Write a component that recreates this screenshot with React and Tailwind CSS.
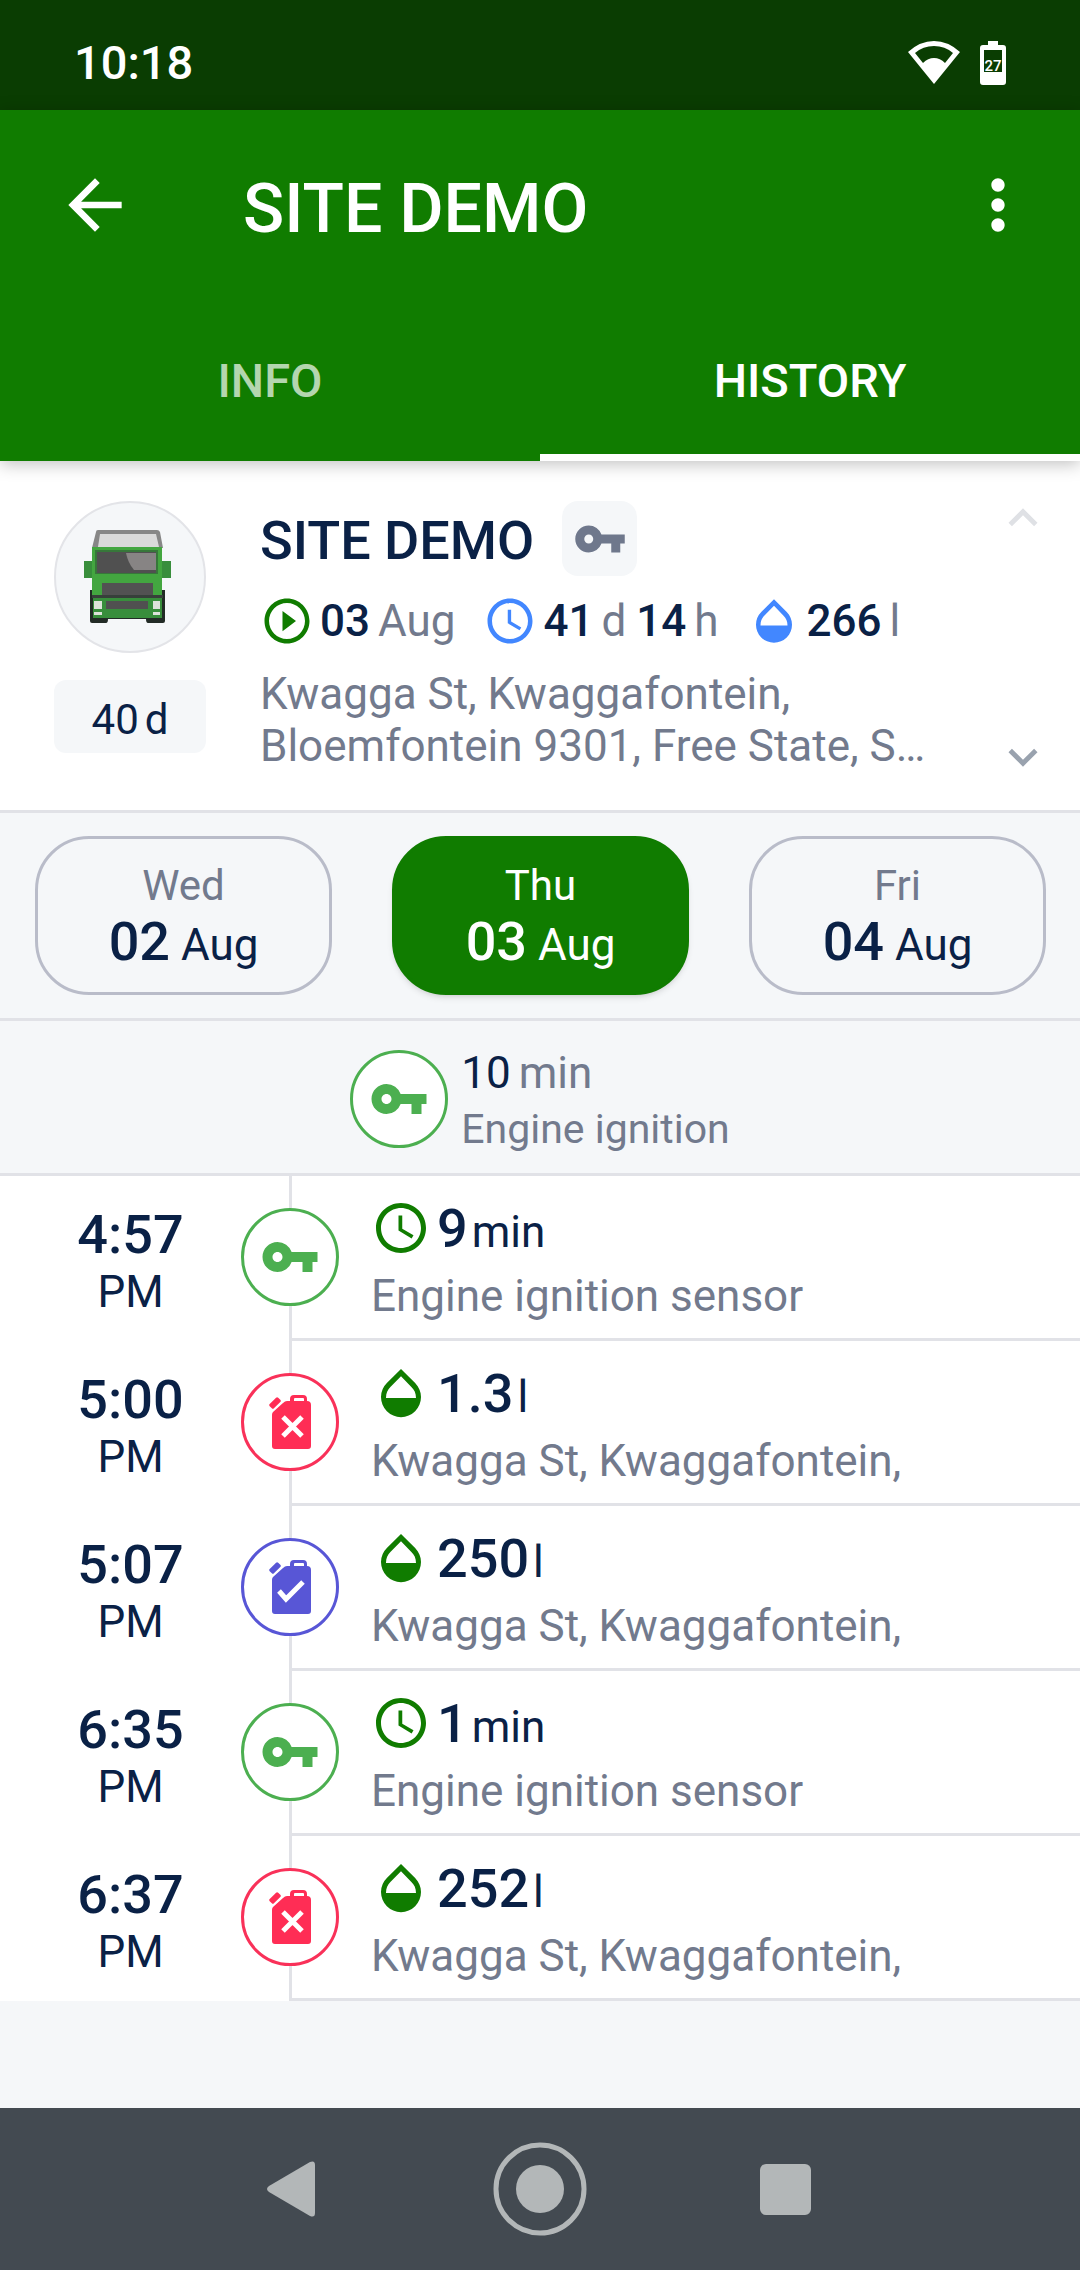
import {
  MdAccessTime,
  MdArrowBack,
  MdExpandLess,
  MdExpandMore,
  MdMoreVert,
  MdOpacity,
  MdPlayCircleOutline,
  MdVpnKey,
} from "react-icons/md";

const days = [
  { weekday: "Wed", day: "02", month: "Aug" },
  { weekday: "Thu", day: "03", month: "Aug", selected: true },
  { weekday: "Fri", day: "04", month: "Aug" },
];

const events = [
  { time: "4:57", type: "ignition", value: "9", unit: "min", text: "Engine ignition sensor" },
  { time: "5:00", type: "drain", value: "1.3", unit: "l", text: "Kwagga St, Kwaggafontein," },
  { time: "5:07", type: "refuel", value: "250", unit: "l", text: "Kwagga St, Kwaggafontein," },
  { time: "6:35", type: "ignition", value: "1", unit: "min", text: "Engine ignition sensor" },
  { time: "6:37", type: "drain", value: "252", unit: "l", text: "Kwagga St, Kwaggafontein," },
];

const eventColors = {
  ignition: "border-[#4caf50] text-[#4caf50]",
  drain: "border-[#f93159] text-[#ff2d55]",
  refuel: "border-[#5856d6] text-[#5856d6]",
};

const Truck = () => (
  <svg viewBox="0 0 87 93" className="w-[87px] h-[93px]" aria-hidden="true">
    <path d="M14 0h59q2 0 3 2l3 16H8l4-16q0-2 2-2z" fill="#878787" />
    <path d="M16 4h56l3 13H14z" fill="#dadada" />
    <path d="M6 60h75v31q0 2-2 2H64q-2 0-2-4H24q0 4-2 4H8q-2 0-2-2z" fill="#222b26" />
    <path d="M0 31h9v17H0zM77 31h10v17H77z" fill="#388e3c" />
    <path d="M8 17h70v48H8z" fill="#43a640" />
    <path d="M11 20h63v24H11z" fill="#37773a" />
    <path d="M13 22h59v21H13z" fill="#505050" />
    <path d="M42 23h30v17H50q-6-7-8-17z" fill="#878484" />
    <path d="M18 53h51v13H18z" fill="#525252" />
    <path d="M8 65h71v3H8z" fill="#37403a" />
    <path d="M9 68h69v20H9z" fill="#388e3c" />
    <path d="M22 71h42v8H22z" fill="#505050" />
    <path d="M10 71h8v8h-8zM69 71h7v8h-7zM10 82h8v3h-8zM69 82h7v3h-7z" fill="#dde2da" />
  </svg>
);

const FuelCan = ({ checked }) => (
  <svg viewBox="0 0 42 54" className="w-[42px] h-[54px]" aria-hidden="true">
    <path
      d="M4 17 14 8q2-2 4-2h3V4q0-4 4-4h9q4 0 4 4v2q4 0 4 4v41q0 3-3 3H6q-3 0-3-3V20q0-2 1-3zM26 3q-1 0-1 1v2h10V4q0-1-1-1z"
      fill="currentColor"
      fillRule="evenodd"
    />
    <rect x="0" y="5" width="12" height="6" rx="1.5" fill="currentColor" transform="rotate(-45 6 8)" />
    <path
      d={checked ? "M10 31l7 8 17-17" : "M14 22l19 19M33 22L14 41"}
      fill="none"
      stroke="white"
      strokeWidth="5"
    />
  </svg>
);

const EventBadge = ({ type }) => (
  <span
    className={`flex items-center justify-center shrink-0 w-[98px] h-[98px] rounded-full border-3 bg-white ${eventColors[type]}`}
  >
    {type === "ignition" ? (
      <MdVpnKey className="w-[60px] h-[60px]" />
    ) : (
      <FuelCan checked={type === "refuel"} />
    )}
  </span>
);

const StatusBar = () => (
  <div className="flex items-center justify-between h-[110px] pt-4 px-[74px] bg-[#0a3d02] text-white">
    <span className="text-[47px] leading-[56px] font-medium">10:18</span>
    <div className="flex items-center gap-5">
      <svg viewBox="0 0 52 44" className="w-[52px] h-11" aria-hidden="true">
        <path
          d="M26 0Q40 0 52 11L26 43 0 11Q12 0 26 0zM26 5Q15 5 7 12L15 22Q20 17 26 17T37 22L45 12Q37 5 26 5z"
          fill="white"
          fillRule="evenodd"
        />
      </svg>
      <svg viewBox="0 0 26 44" className="w-[26px] h-11" aria-hidden="true">
        <path
          d="M8 0h10v4h5q3 0 3 3v34q0 3-3 3H3q-3 0-3-3V7q0-3 3-3h5zM4 9v22h18V9z"
          fill="white"
          fillRule="evenodd"
        />
        <text x="13" y="30" textAnchor="middle" fontSize="15" fontWeight="500" fill="white">
          27
        </text>
      </svg>
    </div>
  </div>
);

const Header = () => (
  <header className="relative bg-[#107c00] text-white shadow-[0_3px_16px_rgba(0,0,0,0.25)]">
    <div className="flex items-center h-[190px] pl-[55px] pr-[42px]">
      <button type="button" aria-label="Back">
        <MdArrowBack className="w-20 h-20" />
      </button>
      <h1 className="grow pl-[108px] pt-2 text-[68px] leading-[78px] font-medium">SITE DEMO</h1>
      <button type="button" aria-label="More options">
        <MdMoreVert className="w-20 h-20" />
      </button>
    </div>
    <div role="tablist" className="grid grid-cols-2 h-[161px] text-[47px] leading-[56px] font-medium">
      <button
        type="button"
        role="tab"
        aria-selected="false"
        className="pt-2 border-b-7 border-transparent text-white/70"
      >
        INFO
      </button>
      <button type="button" role="tab" aria-selected="true" className="pt-2 border-b-7 border-white">
        HISTORY
      </button>
    </div>
  </header>
);

const Measure = ({ value, unit }) => (
  <span className="flex gap-2">
    <b className="font-medium">{value}</b>
    <span className="text-[#727a8d]">{unit}</span>
  </span>
);

const Summary = () => (
  <section className="flex h-[352px] pl-[54px] pr-7 pt-10 bg-white border-b-3 border-[#e1e2e7]">
    <div className="flex flex-col gap-[27px] w-[152px] shrink-0">
      <div className="flex items-center justify-center h-[152px] pr-[6px] pb-[2px] rounded-full border-2 border-[#e3e4e8] bg-[#f5f7f9]">
        <Truck />
      </div>
      <div className="flex items-center justify-center gap-[6px] h-[73px] pt-[6px] rounded-xl bg-[#f5f7f9] text-[42px] leading-[52px]">
        <span>40</span>
        <span>d</span>
      </div>
    </div>

    <div className="grow min-w-0 pl-[54px]">
      <div className="flex items-center gap-7">
        <h2 className="text-[54px] leading-[70px] pt-1 font-medium">SITE DEMO</h2>
        <span className="flex items-center justify-center w-[75px] h-[75px] rounded-2xl bg-[#f5f7f9] text-[#6f788c]">
          <MdVpnKey className="w-[54px] h-[54px]" />
        </span>
      </div>

      <div className="flex items-center gap-7 pt-[18px] text-[44px] leading-[52px]">
        <div className="flex items-center gap-[6px]">
          <MdPlayCircleOutline className="w-[54px] h-[54px] text-[#107c00]" />
          <Measure value="03" unit="Aug" />
        </div>
        <div className="flex items-center gap-[6px]">
          <MdAccessTime className="w-[54px] h-[54px] text-[#4287ff]" />
          <span className="flex gap-[10px]">
            <Measure value="41" unit="d" />
            <Measure value="14" unit="h" />
          </span>
        </div>
        <div className="flex items-center gap-[6px]">
          <MdOpacity className="w-[54px] h-[54px] text-[#4287ff]" />
          <Measure value="266" unit="l" />
        </div>
      </div>

      <p className="pt-5 text-[44px] leading-[52px] text-[#727a8d]">
        Kwagga St, Kwaggafontein,
        <br />
        Bloemfontein 9301, Free State, S…
      </p>
    </div>

    <div className="flex flex-col justify-between pb-6 -mt-3">
      <button type="button" aria-label="Previous object" className="text-[#dfe1e5]">
        <MdExpandLess className="w-[58px] h-[58px]" />
      </button>
      <button type="button" aria-label="Next object" className="text-[#99a2ae]">
        <MdExpandMore className="w-[58px] h-[58px]" />
      </button>
    </div>
  </section>
);

const DayPicker = () => (
  <nav className="grid grid-cols-3 gap-[60px] pl-[35px] pr-[34px] py-[23px] border-b-3 border-[#e1e2e7]">
    {days.map(({ weekday, day, month, selected }) => (
      <button
        key={day}
        type="button"
        className={`flex flex-col items-center h-[159px] pt-[22px] rounded-[54px] border-3 ${
          selected
            ? "border-[#107c00] bg-[#107c00] text-white shadow-md"
            : "border-[#b9bcc9]"
        }`}
      >
        <span className={`text-[42px] leading-[50px] ${selected ? "" : "text-[#727a8d]"}`}>
          {weekday}
        </span>
        <span className="text-[44px] leading-[62px]">
          <b className="text-[54px] font-medium">{day}</b> {month}
        </span>
      </button>
    ))}
  </nav>
);

const Totals = () => (
  <section className="flex items-center justify-center gap-[13px] h-[155px] pt-1 border-b-3 border-[#e1e2e7]">
    <EventBadge type="ignition" />
    <div className="pt-1 text-[#727a8d]">
      <p className="flex gap-2 text-[44px] leading-[56px]">
        <span className="text-[#0a2146]">10</span>
        min
      </p>
      <p className="text-[41px] leading-[56px]">Engine ignition</p>
    </div>
  </section>
);

const EventRow = ({ event }) => {
  const ValueIcon = event.type === "ignition" ? MdAccessTime : MdOpacity;

  return (
    <li className="flex h-[165px] bg-white">
      <div className="flex flex-col items-center w-[241px] shrink-0 pl-5 pt-7">
        <span className="text-[54px] leading-[62px] font-medium">{event.time}</span>
        <span className="text-[44px] leading-[52px]">PM</span>
      </div>
      <div className="flex flex-col items-center w-[98px] shrink-0">
        <span className="w-[3px] h-8 bg-[#e1e2e7]" />
        <EventBadge type={event.type} />
        <span className="w-[3px] grow bg-[#e1e2e7]" />
      </div>
      <div className="grow min-w-0 -ml-12 pl-20 pt-5 border-b-3 border-[#e1e2e7]">
        <div className="flex items-center gap-[6px] h-16">
          <ValueIcon className="w-[60px] h-[60px] text-[#107c00]" />
          <span className="flex items-baseline gap-1 pt-1 leading-[64px]">
            <b className="text-[54px] font-medium">{event.value}</b>
            <span className="text-[44px]">{event.unit}</span>
          </span>
        </div>
        <p className="pt-[10px] text-[44px] leading-[52px] text-[#727a8d] truncate">{event.text}</p>
      </div>
    </li>
  );
};

const BottomNav = () => (
  <footer className="flex items-center justify-center gap-[173px] h-[162px] pr-1 bg-[#434a51]">
    <button type="button" aria-label="Back">
      <svg viewBox="0 0 54 56" className="w-[54px] h-14">
        <path d="M3 25 44 1q5-2 5 3v48q0 5-5 3L3 31q-4-3 0-6z" fill="#b3b7b8" />
      </svg>
    </button>
    <button type="button" aria-label="Home">
      <svg viewBox="0 0 94 94" className="w-[94px] h-[94px]">
        <circle cx="47" cy="47" r="44" fill="none" stroke="#b3b7b8" strokeWidth="5" />
        <circle cx="47" cy="47" r="24" fill="#b3b7b8" />
      </svg>
    </button>
    <button type="button" aria-label="Recent apps" className="w-[51px] h-[51px] rounded-md bg-[#b3b7b8]" />
  </footer>
);

const App = () => {
  return (
    <div className="flex flex-col min-h-screen bg-[#f5f7f9] font-[Roboto,sans-serif] text-[#0a2146]">
      <StatusBar />
      <Header />
      <main className="grow">
        <Summary />
        <DayPicker />
        <Totals />
        <ul>
          {events.map((event) => (
            <EventRow key={event.time} event={event} />
          ))}
        </ul>
      </main>
      <BottomNav />
    </div>
  );
};

export default App;
